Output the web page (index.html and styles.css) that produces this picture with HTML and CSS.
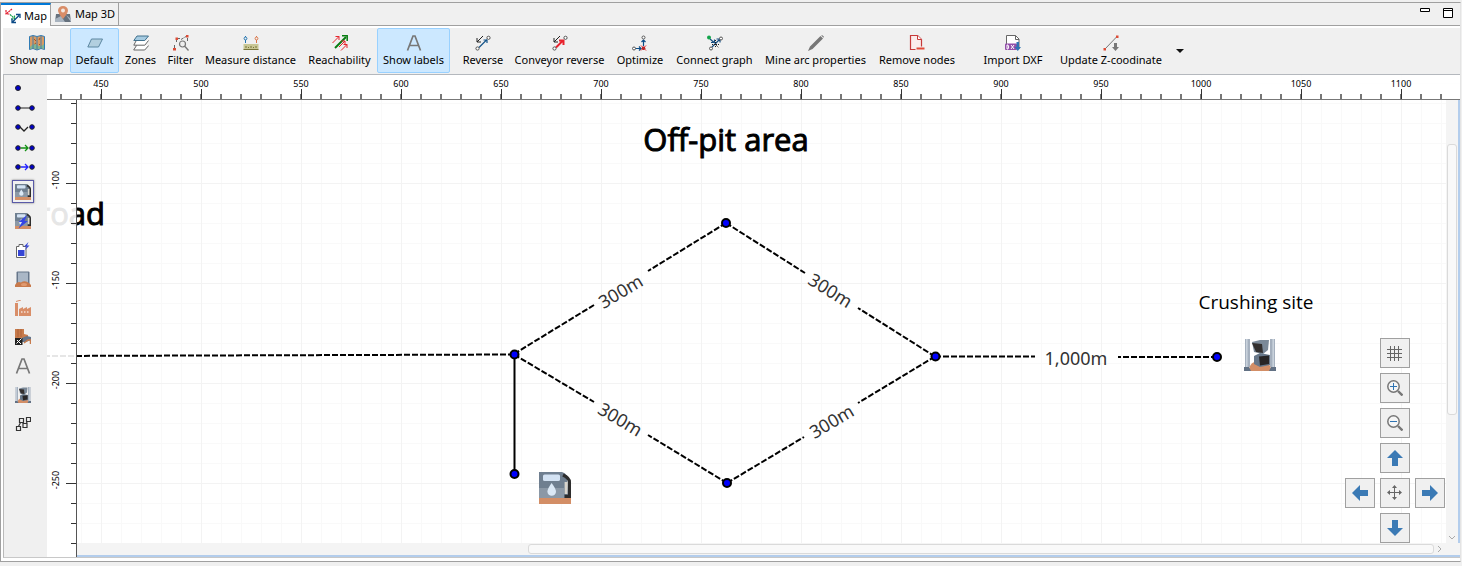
FILE: index.html
```html
<!DOCTYPE html>
<html lang="en">
<head>
<meta charset="utf-8">
<title>Map</title>
<link rel="stylesheet" href="styles.css">
</head>
<body>
<svg class="sprite" aria-hidden="true">
  <symbol id="fuel" viewBox="0 0 16 16">
    <path d="M0 0h11.500q1.500.2 2.500 2l.5 11H0z" fill="#6f7f90"/>
    <path d="M0 8h12.500v5H0z" fill="#8b98a6"/>
    <rect x="2" y="1.200" width="8.500" height="3.300" rx=".8" fill="#d3e2f3"/>
    <path d="M6.300 5.500q2.200 3 2.200 4.200a2.100 2.100 0 0 1-4.300 0q0-1.200 2.100-4.200z" fill="#dbe8f5"/>
    <path d="M12 1.500Q15.200 3 15.200 5v7.200H12.800" fill="none" stroke="#2d2d2d" stroke-width="1.600"/>
    <path d="M13.500 5v6" stroke="#d8d4cc" stroke-width="1.400"/>
    <rect y="13" width="16" height="3" fill="#d38e66"/>
  </symbol>
  <symbol id="crusher" viewBox="0 0 16 16">
    <path d="M.5 0h2.500v14H.500zM13 0h2.500v14H13z" fill="#a5b0be"/>
    <path d="M1 0h.8v14H1zM14.200 0h.8v14h-.8z" fill="#c9d2dc"/>
    <path d="M2.500 16q0-5 5.500-5t5.500 5z" fill="#d38e66"/>
    <path d="M0 14h2.500l1 2H0zM16 14h-2.500l-1 2H16z" fill="#627184"/>
    <path d="M4 1.500L8 .5h4.500L12 5.500 9.500 7.500 5 6.500z" fill="#7b8998"/>
    <path d="M4 2l5 .5.5 4.500L6 6.500z" fill="#332f2e"/>
    <path d="M5 8.500L8 7l5 1v5l-5 1-3-1.500z" fill="#677789"/>
    <path d="M7.500 8.700l5-.5v4.300l-4.500.7z" fill="#282525"/>
  </symbol>
  <symbol id="letter-a" viewBox="0 0 16 16">
    <path d="M1.500 15.500L7 1h2l5.500 14.500M4 10.500h8" fill="none" stroke="#777" stroke-width="1.700"/>
  </symbol>
</svg>

<main class="view">
  <header class="tabs">
    <button class="tab tab-active">
      <svg class="icon" viewBox="0 0 16 16"><path d="M7 1L1.500 5.500M1 2v4h4" fill="none" stroke="#e31b2c" stroke-width="1.200" stroke-dasharray="2 .6"/><path d="M5 6.500l4.500 4M9.500 7.500v3.500H6" fill="none" stroke="#16a04a" stroke-width="1.200" stroke-dasharray="2 .5"/><path d="M7.500 14L14 7.500M11 6.500h4V10M7 10.500v4h4" fill="none" stroke="#0b4a86" stroke-width="1.300"/></svg>
      <span>Map</span>
    </button>
    <button class="tab">
      <svg class="icon" viewBox="0 0 16 16"><path d="M1 8h14l1 8H0z" fill="#66717d"/><path d="M0 13l6-3 4 6H0zM11 9l5 4v3z" fill="#a8b3bf"/><path d="M8 13Q3 7 3 4.500a5 4.500 0 0 1 10 0Q13 7 8 13z" fill="#d98d68"/><circle cx="8" cy="4.500" r="2" fill="#f3e9e3"/></svg>
      <span>Map 3D</span>
    </button>
    <div class="window-actions">
      <button aria-label="Minimize"><svg width="12" height="12"><path d="M1.500 1.500h9v3h-9z" fill="#fff" stroke="#000"/></svg></button>
      <button aria-label="Maximize"><svg width="12" height="12"><path d="M1.500 1.500h9v9h-9zM1.500 3.500h9" fill="#fff" stroke="#000"/></svg></button>
    </div>
  </header>

  <nav class="toolbar" aria-label="Map tools">
    <button class="tool"><svg class="icon" viewBox="0 0 16 16"><path d="M.5 1.500L4 .5l4 1 4-1 3.500 1v13l-3.500-1-4 1.500-4-1.500-3.500 1z" fill="#d99a62" stroke="#2f7bb5"/><path d="M1 12q4-5 7-2t7-1v5l-3-1-4 1.500-4-1.500-3 1z" fill="#7eb592"/><path d="M4 1v13M8 2v13M12 1v13" stroke="#467da3"/><path d="M5 4l2 2M10 5l1-2M5.500 9L7 8M10 9l1 1" stroke="#a65322"/></svg><span>Show map</span></button>
    <button class="tool tool-on" aria-pressed="true"><svg class="icon" viewBox="0 0 16 16"><path d="M4.500 4h11l-4 8H.8z" fill="#b2cfdf" stroke="#5c87a1"/></svg><span>Default</span></button>
    <button class="tool"><svg class="icon" viewBox="0 0 16 16"><path d="M3.500 10.500L.7 15h11l4-4.500M3 6L.8 10.200h11l3.700-4.700" fill="#fff" stroke="#666"/><path d="M4 1h11.500l-3.700 4.500H.8z" fill="#a6cbe1" stroke="#42728e"/></svg><span>Zones</span></button>
    <button class="tool"><svg class="icon" viewBox="0 0 16 16"><path d="M1.500 13V9M3.500 7V3.500H7M8 4.500l5-3M14.500 3v4" fill="none" stroke="#666" stroke-dasharray="3 1"/><circle cx="9.500" cy="9" r="3" fill="#eee" stroke="#777" stroke-width="1.200"/><path d="M12 11.500l3.500 4" stroke="#777" stroke-width="1.400"/><path d="M0 13h3v2.500H0zM2.500 2.500H5V5H2.500zM13 0h2.500v2.500H13z" fill="#dc4c37"/></svg><span>Filter</span></button>
    <button class="tool"><svg class="icon" viewBox="0 0 16 16"><rect x=".5" y="9" width="15" height="5.500" fill="#c9c795"/><path d="M3 11v2M5.500 12v1M8 11v2M10.500 12v1M13 11v2M.5 14.500h15" stroke="#777439"/><circle cx="2.500" cy="3.500" r="1.400" fill="none" stroke="#2374b0"/><path d="M2.500 1v1M2.500 5v3" stroke="#2374b0"/><circle cx="13.500" cy="3.500" r="1.400" fill="none" stroke="#d97547"/><path d="M13.500 1v1M13.500 5v3" stroke="#d97547"/></svg><span>Measure distance</span></button>
    <button class="tool"><svg class="icon" viewBox="0 0 16 16"><path d="M3 13L14 2" stroke="#087d12" stroke-width="2"/><path d="M10 .8h5.200V6" fill="none" stroke="#087d12" stroke-width="1.500"/><path d="M.5 8L7 1.500M3.500 1.500H7V5M7 12l6-6M9.500 6H13v3.500M9 15.500l6-6M11.500 9.500H15V13" fill="none" stroke="#e7252d"/></svg><span>Reachability</span></button>
    <button class="tool tool-on" aria-pressed="true"><svg class="icon"><use href="#letter-a"/></svg><span>Show labels</span></button>
    <button class="tool after-gap"><svg class="icon" viewBox="0 0 16 16"><path d="M8 1L2 7M2 3v4h4" fill="none" stroke="#222"/><path d="M4 12.500l8-8M8.500 5h3.500v3" fill="none" stroke="#17568b" stroke-width="1.200"/><circle cx="2.500" cy="13.500" r="1.600" fill="#fff" stroke="#555"/><circle cx="13.500" cy="2.800" r="1.600" fill="#fff" stroke="#555"/></svg><span>Reverse</span></button>
    <button class="tool"><svg class="icon" viewBox="0 0 16 16"><path d="M8 1L2 7M2 3v4h4" fill="none" stroke="#222"/><path d="M4 12.500l7-7M7 5.500h4.500V10" fill="none" stroke="#e8212c" stroke-width="2"/><circle cx="2.500" cy="13.500" r="1.600" fill="#fff" stroke="#555"/><circle cx="13.500" cy="2.800" r="1.600" fill="#fff" stroke="#555"/></svg><span>Conveyor reverse</span></button>
    <button class="tool"><svg class="icon" viewBox="0 0 16 16"><path d="M11.500 11V5M9.500 7l2-2 2 2M3 13.500h6M7 11.500l2 2-2 2" fill="none" stroke="#0b4c88" stroke-width="1.200"/><circle cx="2" cy="13.500" r="1.500" fill="#fff" stroke="#555"/><circle cx="11.500" cy="2.500" r="1.500" fill="#fff" stroke="#555"/><circle cx="11.500" cy="13.200" r="1.800" fill="#8c2525"/><path d="M9 10.500l5 5M14 10.500l-5 5" stroke="#e3242b"/></svg><span>Optimize</span></button>
    <button class="tool"><svg class="icon" viewBox="0 0 16 16"><path d="M3 4l4 3.500M5 12l8-8M4 7.500h3.500V4.500M9.500 4h3.500v3.500" fill="none" stroke="#154d80" stroke-width="1.200"/><path d="M8.500 5v8M5 9.500h8M9 10l3 3" stroke="#222" stroke-dasharray="1 1"/><circle cx="2" cy="2.500" r="2" fill="#12a44a"/><circle cx="14" cy="3.500" r="1.500" fill="#fff" stroke="#555"/><circle cx="4" cy="13.500" r="1.500" fill="#fff" stroke="#555"/></svg><span>Connect graph</span></button>
    <button class="tool"><svg class="icon" viewBox="0 0 16 16"><path d="M0 16l2-4.500L12.500 1l2.500 2.500L4.500 14zM13.300.5l.7-.5 2 1.800-.6.900z" fill="#777"/></svg><span>Mine arc properties</span></button>
    <button class="tool"><svg class="icon" viewBox="0 0 16 16"><path d="M1.500.5h7l4 4v10h-11z" fill="#fbeceb" stroke="#c63a3a" stroke-width="1.200"/><path d="M8.500.5v4h4" fill="#fff" stroke="#c63a3a"/><path d="M7 12h9v3H7z" fill="#e34a38" stroke="#f0f0f0"/></svg><span>Remove nodes</span></button>
    <button class="tool after-wide-gap"><svg class="icon" viewBox="0 0 16 16"><path d="M1.500 14.500V.5h9l3.500 3.500v10" fill="#fff" stroke="#666"/><path d="M10.500.5v4H14" fill="none" stroke="#666"/><rect y="8.500" width="12" height="6.500" rx="1" fill="#9350aa"/><path d="M2 10v4h1q1.500-2 0-4zM6 10l3 4M9 10l-3 4" fill="none" stroke="#fff"/><path d="M11.500 7h2.500v5h2l-3.200 4L9.500 12h2z" fill="#2f74b3"/></svg><span>Import DXF</span></button>
    <button class="tool"><svg class="icon" viewBox="0 0 16 16"><path d="M2 14L13.500 2" stroke="#777"/><path d="M.5 13H3v2.500H.500zM13 .5h2.500V3H13z" fill="#dc4c37"/><path d="M11 8h3v4h2l-3.500 4L9 12h2z" fill="#777"/></svg><span>Update Z-coodinate</span></button>
    <button class="tool-menu" aria-label="More tools"><svg width="8" height="4"><path d="M0 0h8L4 4z" fill="#111"/></svg></button>
  </nav>

  <section class="editor">
    <nav class="palette" aria-label="Palette">
      <button class="short" aria-label="Node"><svg width="20" height="10"><circle cx="3" cy="6" r="2.500" fill="#00c" stroke="#222"/></svg></button>
      <button class="short" aria-label="Segment"><svg width="20" height="10"><path d="M3 6h14" stroke="#666" stroke-width="1.500"/><circle cx="3" cy="6" r="2.300" fill="#00c" stroke="#222"/><circle cx="17" cy="6" r="2.300" fill="#00c" stroke="#222"/></svg></button>
      <button class="short" aria-label="Polyline"><svg width="20" height="10"><path d="M5 5l4 4 4-4" fill="none" stroke="#222" stroke-width="1.300"/><circle cx="3" cy="5" r="2.300" fill="#00c" stroke="#222"/><circle cx="17" cy="5" r="2.300" fill="#00c" stroke="#222"/></svg></button>
      <button class="short" aria-label="Green arc"><svg width="20" height="10"><path d="M6 6h7M10 3l3 3-3 3" fill="none" stroke="#129012" stroke-width="1.300"/><circle cx="3" cy="6" r="2.300" fill="#00c" stroke="#222"/><circle cx="17" cy="6" r="2.300" fill="#00c" stroke="#222"/></svg></button>
      <button class="short" aria-label="Blue arc"><svg width="20" height="10"><path d="M6 5h7M10 2l3 3-3 3" fill="none" stroke="#22f" stroke-width="1.300"/><circle cx="3" cy="5" r="2.300" fill="#00c" stroke="#222"/><circle cx="17" cy="5" r="2.300" fill="#00c" stroke="#222"/></svg></button>
      <button class="chosen" aria-label="Fuel station" aria-pressed="true"><svg class="icon"><use href="#fuel"/></svg></button>
      <button aria-label="Electric fuel station"><svg class="icon" viewBox="0 0 16 16"><use href="#fuel" width="16" height="16"/><path d="M12 2L3.500 9H7l-3.500 6.500L13 8H9.500z" fill="#3545e5"/></svg></button>
      <button aria-label="Charging station"><svg class="icon" viewBox="0 0 16 16"><path d="M1.500 4.500h2.500v-2h4v2h3v11H1.500z" fill="#fff" stroke="#666"/><path d="M3 8h6.500v6H3z" fill="#3545d5"/><path d="M13.500 0L9 4.500h2.500L10 8l4.500-4.500H12z" fill="#3545d5"/></svg></button>
      <button aria-label="Silo"><svg class="icon" viewBox="0 0 16 16"><rect x="1.500" y=".5" width="13" height="14" rx="1" fill="#66768a"/><rect x="3" y="1.500" width="10" height="11" fill="#aab7c6"/><path d="M0 14q2-4 6-2.500 4-2.500 8 .5l2 2v2H0z" fill="#c87a4c"/><ellipse cx="9" cy="13.500" rx="3" ry="1.600" fill="#e09a70"/></svg></button>
      <button aria-label="Plant"><svg class="icon" viewBox="0 0 16 16"><path d="M0 16V3h3v13M4 16V9l4-2v2l4-2v2l4-2v9z" fill="#d98e68"/><path d="M1 1.500L6 0" stroke="#d98e68"/><path d="M6 12h1.500M9 12h1.500M12 12h1.500" stroke="#f4ded2" stroke-width="1.500"/></svg></button>
      <button aria-label="Dump"><svg class="icon" viewBox="0 0 16 16"><path d="M0 0h9v5l4 1v3H0z" fill="#c77b4c"/><path d="M3 0v8M6 0v8" stroke="#ad6238"/><path d="M7 9l5-2 4 1v3l-5 2H7z" fill="#65758a"/><rect y="9" width="7.500" height="7" fill="#222"/><path d="M1.500 14.500l5-5M2 11l4 4" stroke="#fff"/><path d="M9 14l4-3h2.500v4" fill="none" stroke="#c77b4c" stroke-width="1.500"/></svg></button>
      <button aria-label="Label"><svg class="icon"><use href="#letter-a"/></svg></button>
      <button aria-label="Crusher"><svg class="icon"><use href="#crusher"/></svg></button>
      <button aria-label="Chain"><svg class="icon" viewBox="0 0 16 16"><path d="M1.500 10.500h4v4h-4zM4.500 2.500h4v4h-4zM8 7.500h4v4H8zM11.500 1.500h4v4h-4zM3.500 10.500l2-4M7 6.500l2 1M11 7.500l1.500-2" fill="none" stroke="#333" stroke-width="1.200"/></svg></button>
    </nav>

    <div class="canvas">
      <svg class="map" role="img" aria-label="Off-pit area map">
        <defs>
          <pattern id="grid-minor" x="60" y="83" width="20" height="20" patternUnits="userSpaceOnUse"><path d="M1.500 0v20M0 .5h20" stroke="#f9f9f9"/></pattern>
          <pattern id="grid-major" x="100" y="83" width="100" height="100" patternUnits="userSpaceOnUse"><path d="M1.500 0v100M0 .5h100" stroke="#f3f3f3"/></pattern>
          <pattern id="ticks-x" x="60" y="89" width="20" height="10" patternUnits="userSpaceOnUse"><path d="M1 5v5" stroke="#555" stroke-width="2" stroke-opacity=".8"/></pattern>
          <pattern id="ticks-x-major" x="100" y="89" width="100" height="10" patternUnits="userSpaceOnUse"><path d="M1.500 0v10" stroke="#333"/></pattern>
          <pattern id="ticks-y" x="66" y="83" width="10" height="20" patternUnits="userSpaceOnUse"><path d="M5 .5h5" stroke="#333"/></pattern>
          <pattern id="ticks-y-major" x="66" y="83" width="10" height="100" patternUnits="userSpaceOnUse"><path d="M0 .5h10" stroke="#333"/></pattern>
        </defs>
        <g transform="translate(-47 -75)">
          <rect x="47" y="75" width="100%" height="100%" fill="url(#grid-minor)"/>
          <rect x="47" y="75" width="100%" height="100%" fill="url(#grid-major)"/>
          <g class="arc">
            <path d="M514 354.500L47 356"/>
            <path d="M514 354L594 305M726 223l-78 48"/>
            <path d="M726 223l79 50M935 356.500L858 308"/>
            <path d="M514 354.500L594 402M727 483l-79-48"/>
            <path d="M727 483l77-46M935 356.500L858 403"/>
            <path d="M935 356.500h100M1217 357h-99"/>
          </g>
          <path class="road" d="M514.500 354v120"/>
          <g class="node">
            <circle cx="514.500" cy="354.500" r="4"/><circle cx="726" cy="223" r="4"/><circle cx="935.500" cy="356.500" r="4"/>
            <circle cx="727" cy="483" r="4"/><circle cx="1217" cy="357" r="4"/><circle cx="514.500" cy="474" r="4"/>
          </g>
          <g class="distance">
            <text transform="translate(624 297) rotate(-31)">300m</text>
            <text transform="translate(827 296) rotate(32)">300m</text>
            <text transform="translate(617 425) rotate(31)">300m</text>
            <text transform="translate(835 427) rotate(-31)">300m</text>
            <text x="1076" y="365">1,000m</text>
          </g>
          <text class="area" x="726" y="151">Off-pit area</text>
          <text class="area area-end" x="105" y="225">road</text>
          <text class="site" x="1256" y="309">Crushing site</text>
          <use href="#fuel" x="539" y="472" width="32" height="32"/>
          <use href="#crusher" x="1244" y="339" width="32" height="32"/>

          <rect x="47" y="75" width="100%" height="24" class="ruler"/>
          <rect x="47" y="99" width="29" height="100%" class="ruler"/>
          <rect x="47" y="89" width="1399" height="10" fill="url(#ticks-x)"/>
          <rect x="47" y="89" width="1399" height="10" fill="url(#ticks-x-major)"/>
          <rect x="66" y="100" width="10" height="456" fill="url(#ticks-y)"/>
          <rect x="66" y="100" width="10" height="456" fill="url(#ticks-y-major)"/>
          <rect x="47" y="99" width="100%" height="1" fill="#777"/>
          <rect x="76" y="100" width="1" height="100%" fill="#555"/>
          <g class="scale">
            <text x="101" y="87">450</text><text x="201" y="87">500</text><text x="301" y="87">550</text><text x="401" y="87">600</text><text x="501" y="87">650</text><text x="601" y="87">700</text><text x="701" y="87">750</text><text x="801" y="87">800</text><text x="901" y="87">850</text><text x="1001" y="87">900</text><text x="1101" y="87">950</text><text x="1201" y="87">1000</text><text x="1301" y="87">1050</text><text x="1401" y="87">1100</text>
            <text transform="translate(59 180) rotate(-90)">-100</text><text transform="translate(59 280) rotate(-90)">-150</text><text transform="translate(59 380) rotate(-90)">-200</text><text transform="translate(59 480) rotate(-90)">-250</text>
          </g>
        </g>
      </svg>

      <div class="scroll-y"><div class="thumb-y"></div><svg class="down" width="8" height="6"><path d="M1 1l3 3 3-3" fill="none" stroke="#aaa"/></svg></div>
      <div class="scroll-x"><div class="thumb-x"></div><svg width="6" height="8"><path d="M1 1l3 3-3 3" fill="none" stroke="#aaa"/></svg></div>

      <div class="pad">
        <button class="mid" aria-label="Toggle grid"><svg class="icon" viewBox="0 0 16 16"><path d="M3.500 1v15M7.500 1v15M11.500 1v15M0 4.500h15M0 8.500h15M0 12.500h15" stroke="#666"/></svg></button>
        <button class="mid" aria-label="Zoom in"><svg class="icon" viewBox="0 0 16 16"><circle cx="6.500" cy="6.500" r="5.700" fill="#f5f5f5" stroke="#777" stroke-width="1.500"/><path d="M11 11l4.500 4.500" stroke="#777" stroke-width="2.400"/><path d="M3 6.500h7M6.500 3v7" stroke="#2f74b3"/></svg></button>
        <button class="mid" aria-label="Zoom out"><svg class="icon" viewBox="0 0 16 16"><circle cx="6.500" cy="6.500" r="5.700" fill="#f5f5f5" stroke="#777" stroke-width="1.500"/><path d="M11 11l4.500 4.500" stroke="#777" stroke-width="2.400"/><path d="M3 6.500h7" stroke="#2f74b3"/></svg></button>
        <button class="mid" aria-label="Pan up"><svg class="icon" viewBox="0 0 16 16"><path d="M8 0l8 8h-5v8H5V8H0z" fill="#3b7ab5"/></svg></button>
        <button class="left" aria-label="Pan left"><svg class="icon" viewBox="0 0 16 16"><path d="M0 8l8-8v5h8v6H8v5z" fill="#3b7ab5"/></svg></button>
        <button aria-label="Center"><svg class="icon" viewBox="0 0 16 16"><path d="M7.500 1v13M1 7.500h13" stroke="#666"/><path d="M7.500 0L10 3H5zM7.500 15L10 12H5zM0 7.500L3 5v5zM15 7.500L12 5v5z" fill="#666"/></svg></button>
        <button aria-label="Pan right"><svg class="icon" viewBox="0 0 16 16"><path d="M16 8L8 0v5H0v6h8v5z" fill="#3b7ab5"/></svg></button>
        <button class="mid" aria-label="Pan down"><svg class="icon" viewBox="0 0 16 16"><path d="M8 16l8-8h-5V0H5v8H0z" fill="#3b7ab5"/></svg></button>
      </div>
    </div>
  </section>
</main>
</body>
</html>
```
FILE: styles.css
```css
* { box-sizing: border-box; }
body {
  margin: 0;
  background: #f0f0f0;
  color: #000;
  font: 11px/16px "Noto Sans", "Open Sans", sans-serif;
  overflow: hidden;
}
button {
  margin: 0;
  padding: 0;
  border: 0;
  background: none;
  color: inherit;
  font: inherit;
}
svg { display: block; flex: none; }
.sprite { position: absolute; width: 0; height: 0; }
.icon { width: 16px; height: 16px; }

.view {
  display: flex;
  flex-direction: column;
  height: calc(100vh - 6px);
  margin: 2px 1px 4px 0;
  border: 1px solid #a0a0a0;
  border-right-color: #e4e4e4;
  background: #fff;
}

.tabs {
  display: flex;
  flex: none;
  height: 23px;
  border-bottom: 1px solid #a0a0a0;
  background: #f0f0f0;
}
.tab {
  display: flex;
  align-items: center;
  gap: 4px;
  padding: 0 3px 0 4px;
  border-right: 1px solid #a0a0a0;
  white-space: nowrap;
}
.tab-active {
  height: 23px;
  gap: 3px;
  border-top: 2px solid #0078d7;
  background: #fff;
}
.window-actions {
  display: flex;
  gap: 11px;
  margin: 4px 6px 0 auto;
}
.window-actions button { display: flex; align-items: flex-start; }

.toolbar {
  display: grid;
  grid-template-columns: 67px 49px 43px 37px 103px 75px 73px 59px 101px 60px 89px 113px 90px 87px 124px 13px;
  flex: none;
  height: 47px;
  margin: 2px 0 0 2px;
  padding-bottom: 1px;
  border-bottom: 1px solid #b4b8bd;
  background: #f0f0f0;
}
.tool {
  display: flex;
  flex-direction: column;
  align-items: center;
  padding-top: 6px;
  border: 1px solid transparent;
  white-space: nowrap;
}
.tool span { line-height: 18px; }
.tool-on {
  border-color: #99d1ff;
  border-radius: 2px;
  background: #cce8ff;
}
.after-gap { margin-left: 7px; }
.after-wide-gap { margin-left: 15px; }
.tool-menu { display: flex; align-items: center; justify-content: center; }

.editor {
  display: flex;
  flex: 1;
  min-height: 0;
  margin: 0 0 3px 2px;
  border-left: 1px solid #b9b9b9;
  border-bottom: 1px solid #c8c8c8;
}
.palette {
  display: flex;
  flex-direction: column;
  align-items: center;
  flex: none;
  width: 43px;
  padding: 2px 5px 0 0;
  background: #f0f0f0;
}
.palette button {
  display: flex;
  align-items: center;
  justify-content: center;
  flex: none;
  width: 22px;
  height: 23px;
  margin: 3px 0;
}
.palette .short {
  justify-content: flex-end;
  width: 24px;
  height: 20px;
  margin: 0;
}
.palette .chosen {
  border: 1px solid #5a5aa8;
  box-shadow: 0 0 2px #777;
}

.canvas {
  position: relative;
  flex: 1;
  min-width: 0;
  overflow: hidden;
}
.map { width: 100%; height: 100%; }
.arc { fill: none; stroke: #000; stroke-width: 2; stroke-dasharray: 6 2; }
.road { stroke: #000; stroke-width: 2; }
.node { fill: #00f; stroke: #000; stroke-width: 2; }
.distance { fill: #333; font-size: 18px; text-anchor: middle; }
.area {
  font-family: "Open Sans", "Noto Sans", sans-serif;
  font-size: 31px;
  stroke: #000;
  stroke-width: 1;
  text-anchor: middle;
}
.area-end { text-anchor: end; }
.site { font-family: "Open Sans", "Noto Sans", sans-serif; font-size: 19px; text-anchor: middle; }
.ruler { fill: #fff; fill-opacity: .9; }
.scale { font-size: 9px; text-anchor: middle; }

.scroll-x, .scroll-y {
  position: absolute;
  display: flex;
  background: #f4f4f4;
}
.scroll-x {
  left: 30px;
  right: 0;
  bottom: 0;
  height: 14px;
  align-items: center;
  gap: 3px;
  padding: 0 17px 0 451px;
  border-bottom: 2px solid #b3cdec;
}
.scroll-y {
  top: 25px;
  right: 0;
  bottom: 0;
  width: 14px;
  flex-direction: column;
  align-items: center;
  justify-content: space-between;
  padding: 44px 0 16px;
  border-right: 2px solid #b3cdec;
}
.thumb-x, .thumb-y {
  border: 1px solid #dadada;
  border-radius: 3px;
  background: #f9f9f9;
}
.thumb-x { flex: 1; height: 10px; }
.thumb-y { width: 10px; height: 271px; }

.pad {
  position: absolute;
  right: 15px;
  bottom: 14px;
  display: grid;
  grid-template-columns: repeat(3, 30px);
  grid-auto-rows: 30px;
  gap: 5px;
}
.pad button {
  display: flex;
  align-items: center;
  justify-content: center;
  border: 1px solid #a0a0a0;
  background: #f0f0f0;
}
.mid { grid-column: 2; }
.left { grid-column: 1; }
```
